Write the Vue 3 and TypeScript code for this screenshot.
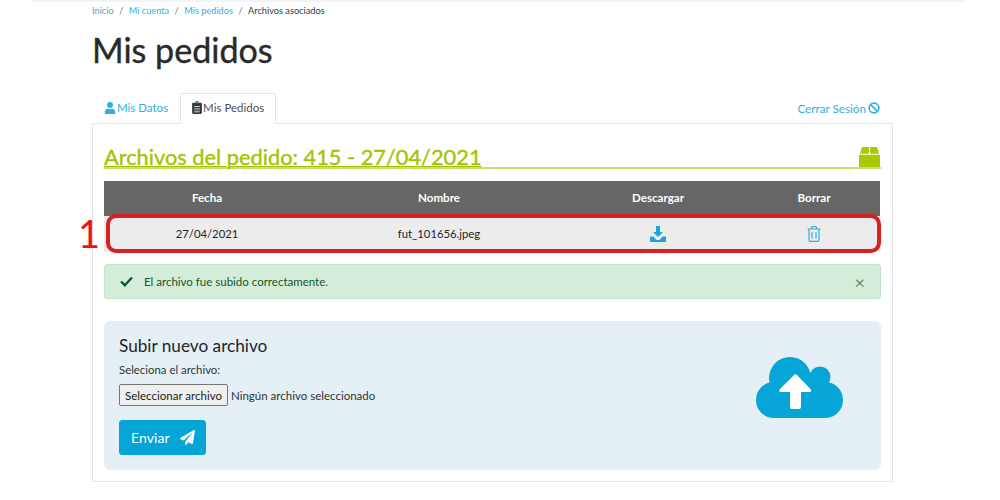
<script setup lang="ts">
const crumbs: string[] = ['Inicio', 'Mi cuenta', 'Mis pedidos']
</script>

<template>
  <div class="page">
    <div class="topline"></div>
    <div class="wrap">
      <nav class="crumbs">
        <template v-for="c in crumbs" :key="c">
          <a>{{ c }}</a><span class="sep">/</span>
        </template>
        <span class="cur">Archivos asociados</span>
      </nav>
      <h1>Mis pedidos</h1>
      <div class="tabs">
        <a class="tab">
          <svg width="12" height="12" viewBox="0 0 448 512" fill="#33aee4"><path d="M224 256a128 128 0 1 0 0-256 128 128 0 0 0 0 256zm90 32h-17a174 174 0 0 1-146 0h-17C60 288 0 348 0 422v42c0 27 21 48 48 48h352c27 0 48-21 48-48v-42c0-74-60-134-134-134z"/></svg>
          Mis Datos
        </a>
        <a class="tab active">
          <svg width="10" height="13" viewBox="0 0 384 512" fill="#343a40"><path d="M336 64h-80a64 64 0 0 0-128 0H48C21 64 0 85 0 112v352c0 27 21 48 48 48h288c27 0 48-21 48-48V112c0-27-21-48-48-48zM192 40a24 24 0 1 1 0 48 24 24 0 0 1 0-48zM80 200h224v24H80zm0 72h224v24H80zm0 72h224v24H80zm0 72h224v24H80z" fill-rule="evenodd"/></svg>
          Mis Pedidos
        </a>
        <a class="logout">
          Cerrar Sesión
          <svg width="12" height="12" viewBox="0 0 12 12" fill="none" stroke="#33aee4" stroke-width="1.6"><circle cx="6" cy="6" r="4.9"/><path d="M2.6 2.6l6.8 6.8"/></svg>
        </a>
      </div>
      <section class="panel">
        <div class="title">
          <h2>Archivos del pedido: 415 - 27/04/2021</h2>
          <svg class="box" width="21" height="20" viewBox="0 0 22 21" fill="#a9c900"><path d="M3 0h7.400v7H1zM11.600 0H19l2 7h-9.400zM0 8.200h22V21H0z"/></svg>
        </div>
        <div class="tablewrap">
          <div class="grid head">
            <span>Fecha</span><span>Nombre</span><span>Descargar</span><span>Borrar</span>
          </div>
          <div class="grid row">
            <span>27/04/2021</span>
            <span>fut_101656.jpeg</span>
            <span>
              <svg width="16" height="16" viewBox="0 0 16 16" fill="#1fa5dc"><path d="M6 0h4v6h3l-5 5-5-5h3z"/><path d="M0 10.500h3.200L6.600 14h2.800l3.400-3.500H16V16H0z"/></svg>
            </span>
            <span>
              <svg width="14" height="16" viewBox="0 0 14 16" fill="none" stroke="#33aee4" stroke-width="1.200"><path d="M.5 3h13M4.500 3V1.600q0-1 1-1h3q1 0 1 1V3M2 3v11q0 1.400 1.400 1.400h7.200Q12 15.400 12 14V3M5 6v6.500M9 6v6.500"/></svg>
            </span>
          </div>
          <div class="mark"></div>
          <div class="num">1</div>
        </div>
        <div class="alert">
          <svg width="13" height="11" viewBox="0 0 13 11" fill="none" stroke="#155724" stroke-width="2.400"><path d="M1 5.500l3.800 3.700L12 1.500"/></svg>
          <span class="msg">El archivo fue subido correctamente.</span>
          <span class="close">×</span>
        </div>
        <div class="upload">
          <div class="form">
            <h3>Subir nuevo archivo</h3>
            <label for="file">Seleciona el archivo:</label>
            <div class="file">
              <button id="file" type="button" class="pick">Seleccionar archivo</button>
              <span>Ningún archivo seleccionado</span>
            </div>
            <button type="button" class="send">
              Enviar
              <svg width="15" height="15" viewBox="0 0 512 512" fill="#fff"><path d="M476 3L13 270c-18 10-16 35 3 43l106 44 287-253c5-5 12 2 8 8L176 402v82c0 24 29 33 43 16l64-78 125 52c14 6 31-3 33-19L512 28c3-20-18-35-36-25z"/></svg>
            </button>
          </div>
          <svg class="cloud" width="88" height="62" viewBox="0 0 88 62">
            <g fill="#05a5d8">
              <circle cx="34" cy="21" r="21"/>
              <circle cx="64" cy="20" r="10.500"/>
              <circle cx="18" cy="43" r="18"/>
              <circle cx="69" cy="43" r="18"/>
              <rect x="18" y="20" width="51" height="41"/>
            </g>
            <path fill="#fff" d="M38 18q1.500-1.500 3 0L54.500 32q2 3-1 3H45V50q0 2-2 2H36q-2 0-2-2V35H25q-3 0-1-3Z"/>
          </svg>
        </div>
      </section>
    </div>
  </div>
</template>

<style>
html, body { margin: 0; background: #fff; }
</style>

<style scoped>
.page {
  width: 1000px;
  height: 500px;
  overflow: hidden;
  font-family: Lato, "Liberation Sans", sans-serif;
  color: #212529;
}
.topline { height: 2px; margin: 0 34px 0 32px; background: #f4f4f4; }
.wrap { width: 801px; margin-left: 92px; }
.crumbs { display: flex; align-items: center; height: 16px; font-size: 9.200px; }
.crumbs a { color: #33aee4; }
.sep { margin: 0 5.500px; color: #6c757d; }
.cur { color: #343a40; }
h1 { margin: 10px 0 0; font-size: 34.100px; line-height: 44px; font-weight: 400; color: #2a2a2a; -webkit-text-stroke: 0.4px #2a2a2a; }
.tabs { display: flex; align-items: stretch; height: 31px; margin-top: 21px; font-size: 11.500px; }
.tab {
  display: flex;
  align-items: center;
  gap: 1px;
  padding: 0 11px 2px;
  color: #33aee4;
  border: 1px solid transparent;
  border-radius: 3px 3px 0 0;
}
.tab.active {
  color: #495057;
  background: #fff;
  border-color: #e6e6e6 #e6e6e6 #fff;
  position: relative;
  z-index: 1;
}
.logout { margin-left: auto; display: flex; align-items: center; gap: 2px; padding: 0 13px 2px 0; font-size: 11.700px; color: #33aee4; }
.panel {
  height: 359px;
  margin-top: -1px;
  box-sizing: border-box;
  border: 1px solid #e6e6e6;
  padding: 0 11px;
}
.title { display: flex; justify-content: space-between; align-items: flex-end; height: 43px; border-bottom: 2px solid #cbdf70; }
h2 { margin: 0 0 -2px; font-size: 21.800px; line-height: 24px; font-weight: 400; color: #a4c400; -webkit-text-stroke: 0.35px #a4c400; text-decoration: underline; text-decoration-thickness: 1px; text-underline-offset: 1px; }
.box { margin-right: 1px; }
.tablewrap { position: relative; margin-top: 12px; }
.grid { display: grid; width: 776px; grid-template-columns: 206px 258px 180px 132px; text-align: center; align-items: center; font-size: 11.300px; }
.grid span { display: flex; justify-content: center; align-items: center; }
.head { height: 35px; padding-bottom: 2px; box-sizing: border-box; background: #666; color: #fff; font-size: 11.600px; font-weight: 700; }
.row { height: 36px; padding-bottom: 1px; box-sizing: border-box; background: #ececec; color: #212529; }
.mark { position: absolute; left: 2px; right: 0; top: 33px; height: 39px; box-sizing: border-box; border: 4px solid #d62222; border-radius: 10px; }
.num { position: absolute; left: -26px; top: 32px; font-size: 38px; line-height: 40px; color: #f01010; }
.alert {
  display: flex;
  align-items: center;
  height: 35px;
  box-sizing: border-box;
  margin-top: 12px;
  padding: 0 15px;
  background: #d4edda;
  border: 1px solid #c3e6cb;
  border-radius: 3px;
  color: #155724;
  font-size: 11.500px;
}
.msg { margin-left: 11px; }
.close { margin-left: auto; font-size: 18px; line-height: 18px; color: #5f8a6a; }
.upload {
  display: flex;
  justify-content: space-between;
  align-items: flex-start;
  height: 149px;
  box-sizing: border-box;
  margin-top: 22px;
  padding: 14px 37px 0 15px;
  background: #e4f0f5;
  border-radius: 6px;
}
.form { display: flex; flex-direction: column; align-items: flex-start; }
h3 { margin: 0; font-size: 17.200px; line-height: 22px; font-weight: 400; color: #212529; }
label { margin-top: 5px; font-size: 11.400px; line-height: 15px; color: #333; }
.file { display: flex; align-items: center; gap: 3px; margin-top: 7px; font-size: 11.500px; color: #333; }
.pick {
  width: 109px;
  height: 22px;
  padding: 0;
  font: inherit;
  color: #222;
  background: #efefef;
  border: 1px solid #767676;
  border-radius: 2px;
}
.send {
  display: flex;
  align-items: center;
  gap: 10px;
  height: 35px;
  margin-top: 14px;
  padding: 0 10px 0 11px;
  font-family: inherit;
  font-size: 14px;
  letter-spacing: 0.1px;
  color: #fff;
  background: #05a5d8;
  border: 1px solid #05a5d8;
  border-radius: 3px;
}
.cloud { margin-top: 22px; }
</style>
